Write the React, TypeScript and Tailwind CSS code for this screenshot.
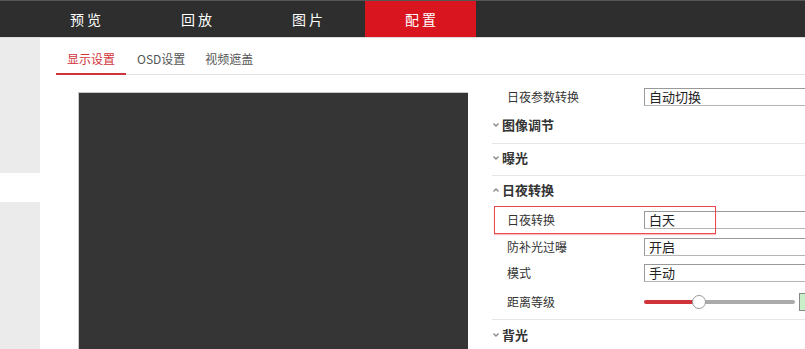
import React from 'react';

const FONT = { fontFamily: '"Noto Sans CJK SC", "Liberation Sans", sans-serif' };

const mainTabs = ['预览', '回放', '图片', '配置'];
const subTabs = ['显示设置', 'OSD设置', '视频遮盖'];

function Chevron({ up = false }: { up?: boolean }) {
  return (
    <svg width="8" height="6" viewBox="0 0 8 6" className="mr-[2px] shrink-0">
      <path
        d={up ? 'M1.5 4.5 L4 2 L6.5 4.5' : 'M1.5 1.5 L4 4 L6.5 1.5'}
        fill="none"
        stroke="#888"
        strokeWidth={1.4}
      />
    </svg>
  );
}

function SelectBox({ value }: { value: string }) {
  return (
    <div className="flex h-[18px] w-[200px] shrink-0 items-center border border-[#b4b4b4] border-t-[#999] border-l-[#999] bg-white pl-[4px] text-[13px] text-[#222]">
      {value}
    </div>
  );
}

function Row({ label, value, h = 'h-[26px]' }: { label: string; value: string; h?: string }) {
  return (
    <div className={`flex ${h} items-center`}>
      <span className="w-[152px] shrink-0 pl-[15px] text-[12px] text-[#333]">{label}</span>
      <SelectBox value={value} />
    </div>
  );
}

function Section({ title, up = false, border = true, h = 'h-[34px]' }: { title: string; up?: boolean; border?: boolean; h?: string }) {
  return (
    <div className={`flex ${h} items-center pb-[3px] ${border ? 'border-b border-[#e6e6e6]' : ''}`}>
      <Chevron up={up} />
      <span className="text-[13px] font-semibold text-[#333]">{title}</span>
    </div>
  );
}

export default function App() {
  return (
    <div className="h-[349px] w-[805px] overflow-hidden bg-white" style={FONT}>
      {/* 顶部导航 */}
      <header className="flex h-[37px] border-t border-[#555] bg-[#2e2e2e] pl-[30px]">
        {mainTabs.map((tab, i) => (
          <div
            key={tab}
            className={`flex w-[111px] items-center justify-center pl-[3px] text-[14px] tracking-[3px] text-white ${i === 3 ? 'ml-[2px] bg-[#d9161f]' : ''}`}
          >
            {tab}
          </div>
        ))}
      </header>
      <div className="h-px bg-[#dcdcdc]" />

      <div className="flex">
        {/* 左侧菜单 */}
        <aside className="flex w-[40px] shrink-0 flex-col">
          <div className="h-[135px] bg-[#ebebeb]" />
          <div className="h-[29px]" />
          <div className="h-[200px] bg-[#ebebeb]" />
        </aside>

        <main className="min-w-0 flex-1 pl-[16px]">
          {/* 子标签 */}
          <nav className="flex h-[37px] items-end border-b border-[#e3e3e3]">
            {subTabs.map((tab, i) => (
              <div
                key={tab}
                className={`flex h-full items-center pt-[5px] text-[12px] ${
                  i === 0
                    ? 'mb-[-1px] border-b-2 border-[#d0343b] px-[11px] text-[#d0343b]'
                    : i === 1
                      ? 'pr-[10px] pl-[11px] text-[#555]'
                      : 'px-[10px] text-[#555]'
                }`}
              >
                {tab}
              </div>
            ))}
          </nav>

          <div className="flex pt-[9px]">
            {/* 视频区域 */}
            <div className="mt-[8px] ml-[22px] h-[300px] w-[390px] shrink-0 border-t border-l border-[#c8c8c8] bg-[#353535]" />

            {/* 参数 */}
            <section className="ml-[24px] min-w-0 flex-1 overflow-hidden">
              <Row label="日夜参数转换" value="自动切换" />
              <Section title="图像调节" />
              <Section title="曝光" h="h-[32px]" />
              <Section title="日夜转换" up border={false} h="h-[30px]" />

              <div className="relative flex h-[28px] items-center">
                <span className="w-[152px] shrink-0 pl-[15px] text-[12px] text-[#333]">日夜转换</span>
                <SelectBox value="白天" />
                <span className="pointer-events-none absolute top-0 left-[2px] h-[28px] w-[222px] border border-[#ec4a52] shadow-[0_1px_1px_rgba(236,74,82,0.35)]" />
              </div>
              <Row label="防补光过曝" value="开启" />
              <Row label="模式" value="手动" />

              <div className="flex h-[34px] items-center border-b border-[#e6e6e6] pb-[1px]">
                <span className="w-[152px] shrink-0 pl-[15px] text-[12px] text-[#333]">距离等级</span>
                <div className="relative flex h-[16px] w-[151px] shrink-0 items-center">
                  <div className="h-[4px] w-[55px] rounded-l-full bg-[#d0343b]" />
                  <div className="h-[4px] flex-1 rounded-r-full bg-[#aaaaaa]" />
                  <span className="absolute top-[1px] left-[48px] h-[14px] w-[14px] rounded-full border border-[#999] bg-white" />
                </div>
                <div className="ml-[4px] h-[18px] w-[20px] shrink-0 border border-[#888] bg-[#c9efc9]" />
              </div>

              <Section title="背光" border={false} h="h-[32px]" />
            </section>
          </div>
        </main>
      </div>
    </div>
  );
}
